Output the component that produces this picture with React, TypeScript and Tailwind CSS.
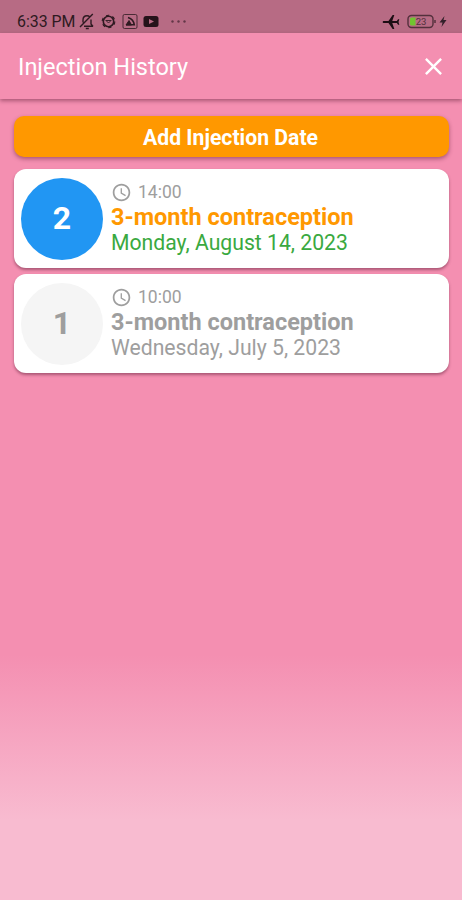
import { MdAccessTime, MdAirplanemodeActive, MdClose } from "react-icons/md";

interface Injection {
    id: number;
    time: string;
    name: string;
    date: string;
    upcoming: boolean;
}

const injections: Injection[] = [
    { id: 2, time: "14:00", name: "3-month contraception", date: "Monday, August 14, 2023", upcoming: true },
    { id: 1, time: "10:00", name: "3-month contraception", date: "Wednesday, July 5, 2023", upcoming: false },
];

function StatusBar() {
    return (
        <div className="flex h-[33px] items-end bg-[#b76b84] pr-[15px] pb-[3px] pl-[17px] text-[#2e1a21]">
            <span className="h-[17px] w-[62px] text-[15.9px] leading-[18px] whitespace-nowrap">6:33 PM</span>
            {/* muted bell */}
            <svg className="h-[17px] w-[16px]" viewBox="0 0 16 17" fill="none" stroke="currentColor" strokeWidth="1.4">
                <path d="M4 9.5V7c0-2.7 1.7-4.3 4-4.3 1 0 2 .3 2.7 1M12 6.5V11l2 2.5M5 13.2h9M6.8 15.5h3M13.8 1L1 14" />
            </svg>
            <svg className="ml-[6px] h-[17px] w-[15px]" viewBox="0 0 15 17" fill="none" stroke="currentColor">
                <circle cx="7.5" cy="8.5" r="5.2" strokeWidth="1.6" />
                <circle cx="7.5" cy="8.5" r="6.3" strokeWidth="1.1" strokeDasharray="3.3 3.3" />
                <path d="M4.5 7.5h6M5.5 8l2 2 2-2" strokeWidth="0.9" />
            </svg>
            <svg className="ml-[6px] h-[17px] w-[16px]" viewBox="0 0 16 17" fill="none" stroke="currentColor">
                <rect x="1" y="1.5" width="14" height="14" rx="1.5" strokeWidth="0.8" />
                <path d="M4 11.8h8.3c-.4-3.6-2.600-6-6.300-7.300" strokeWidth="1.6" />
                <path d="M4 12l3-4.500 2.500 4.500z" fill="currentColor" />
            </svg>
            <svg className="ml-[5px] h-[17px] w-[16px]" viewBox="0 0 16 17">
                <rect x="0.5" y="3" width="15" height="11" rx="2.5" fill="#25131a" />
                <path d="M6 6l5 2.5L6 11z" fill="#b76b84" />
            </svg>
            <svg className="ml-[11px] h-[17px] w-[18px]" viewBox="0 0 18 17" fill="#633747">
                <circle cx="2.5" cy="8.5" r="1.2" />
                <circle cx="8.5" cy="8.5" r="1.2" />
                <circle cx="14.5" cy="8.5" r="1.2" />
            </svg>
            <div className="ml-auto flex items-center">
                <MdAirplanemodeActive className="-my-[2px] h-[20px] w-[20px] scale-x-85 -rotate-90 text-[#1c0d13]" />
                <svg className="ml-[6px] h-[17px] w-[32px]" viewBox="0 0 32 17">
                    <rect x="1" y="2.5" width="25" height="12" rx="3.5" fill="none" stroke="#53303c" strokeWidth="1.4" />
                    <path d="M4.5 4.5h4v8h-4A1.5 1.5 0 0 1 3 11V6A1.5 1.5 0 0 1 4.5 4.5z" fill="#70c52f" />
                    <path d="M28 7v3" stroke="#53303c" strokeWidth="1.5" />
                    <text x="14" y="12" textAnchor="middle" fontSize="9.5" fill="#53303c">
                        23
                    </text>
                </svg>
                <svg className="h-[17px] w-[8px]" viewBox="0 0 8 17" fill="#33202a">
                    <path d="M5.5 3L.5 9.5h3L2.5 14l5-7h-3z" />
                </svg>
            </div>
        </div>
    );
}

function InjectionCard({ injection }: { injection: Injection }) {
    const { id, time, name, date, upcoming } = injection;

    return (
        <li className="flex h-[99px] items-center rounded-[12px] bg-white pl-[7px] shadow-[0_2px_3px_rgba(80,20,45,0.45)]">
            <div
                className={`flex h-[82px] w-[82px] shrink-0 items-center justify-center rounded-full pb-[2px] text-[32px] font-bold ${
                    upcoming ? "bg-[#2196f3] text-white" : "bg-[#f5f5f5] text-[#9e9e9e]"
                }`}
            >
                {id}
            </div>
            <div className="ml-[8px] whitespace-nowrap">
                <div className="flex h-[23px] items-center text-[#9e9e9e]">
                    <MdAccessTime className="h-[21px] w-[21px]" />
                    <span className="ml-[6px] text-[17.5px]">{time}</span>
                </div>
                <div
                    className={`text-[23.5px] leading-[26px] font-bold ${upcoming ? "text-[#ff9800]" : "text-[#9e9e9e]"}`}
                >
                    {name}
                </div>
                <div className={`text-[21.2px] leading-[26px] ${upcoming ? "text-[#3aa940]" : "text-[#9e9e9e]"}`}>{date}</div>
            </div>
        </li>
    );
}

export default function App() {
    return (
        <div className="flex h-[900px] w-[462px] flex-col bg-[linear-gradient(to_bottom,#f48fb1_0,#f48fb1_655px,#f8bbd0_820px)] font-[Roboto,sans-serif]">
            <StatusBar />
            <header className="flex h-[66px] shrink-0 items-center justify-between bg-[#f48fb1] pr-[14px] pl-[18px] text-white shadow-[0_2px_4px_rgba(80,20,45,0.45)]">
                <h1 className="pt-[3px] text-[23.5px]">Injection History</h1>
                <button type="button" aria-label="Close">
                    <MdClose className="h-[29px] w-[29px]" />
                </button>
            </header>
            <main className="flex flex-col pt-[17px] pr-[13px] pl-[14px]">
                <button
                    type="button"
                    className="h-[41px] rounded-[10px] bg-[#ff9800] pt-[2px] pr-[2px] text-[21.2px] font-bold text-white shadow-[0_2px_4px_rgba(80,20,45,0.45)]"
                >
                    Add Injection Date
                </button>
                <ul className="mt-[12px] flex flex-col gap-[6px]">
                    {injections.map((injection) => (
                        <InjectionCard key={injection.id} injection={injection} />
                    ))}
                </ul>
            </main>
        </div>
    );
}
